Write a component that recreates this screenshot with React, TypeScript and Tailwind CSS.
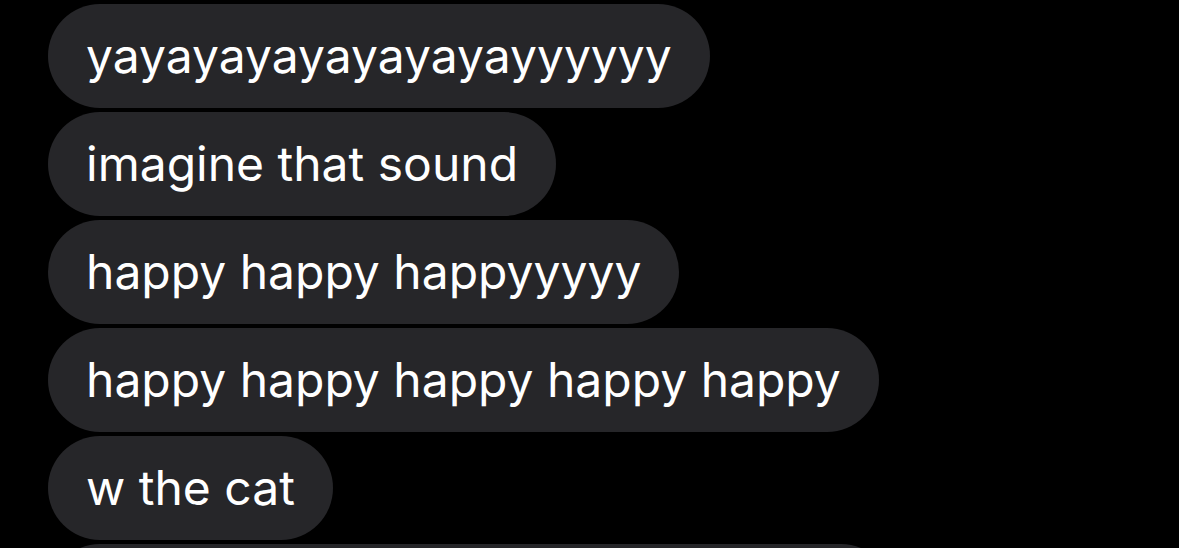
const messages = [
  'yayayayayayayayayyyyyy',
  'imagine that sound',
  'happy happy happyyyyy',
  'happy happy happy happy happy',
  'w the cat',
]

export default function App() {
  return (
    <div className="w-[1179px] h-[548px] overflow-hidden bg-black pt-[4px] pl-[48px] flex flex-col items-start gap-[4px]" style={{ fontFamily: 'Inter, "Noto Sans", sans-serif' }}>
      {messages.map((m) => (
        <div
          key={m}
          className="h-[104px] shrink-0 rounded-full bg-[#262629] px-[38px] flex items-center text-white text-[48px] leading-none"
        >
          {m}
        </div>
      ))}
      {/* next bubble, cut off at the bottom */}
      <div className="h-[104px] w-[845px] shrink-0 rounded-full bg-[#262629]" />
    </div>
  )
}
